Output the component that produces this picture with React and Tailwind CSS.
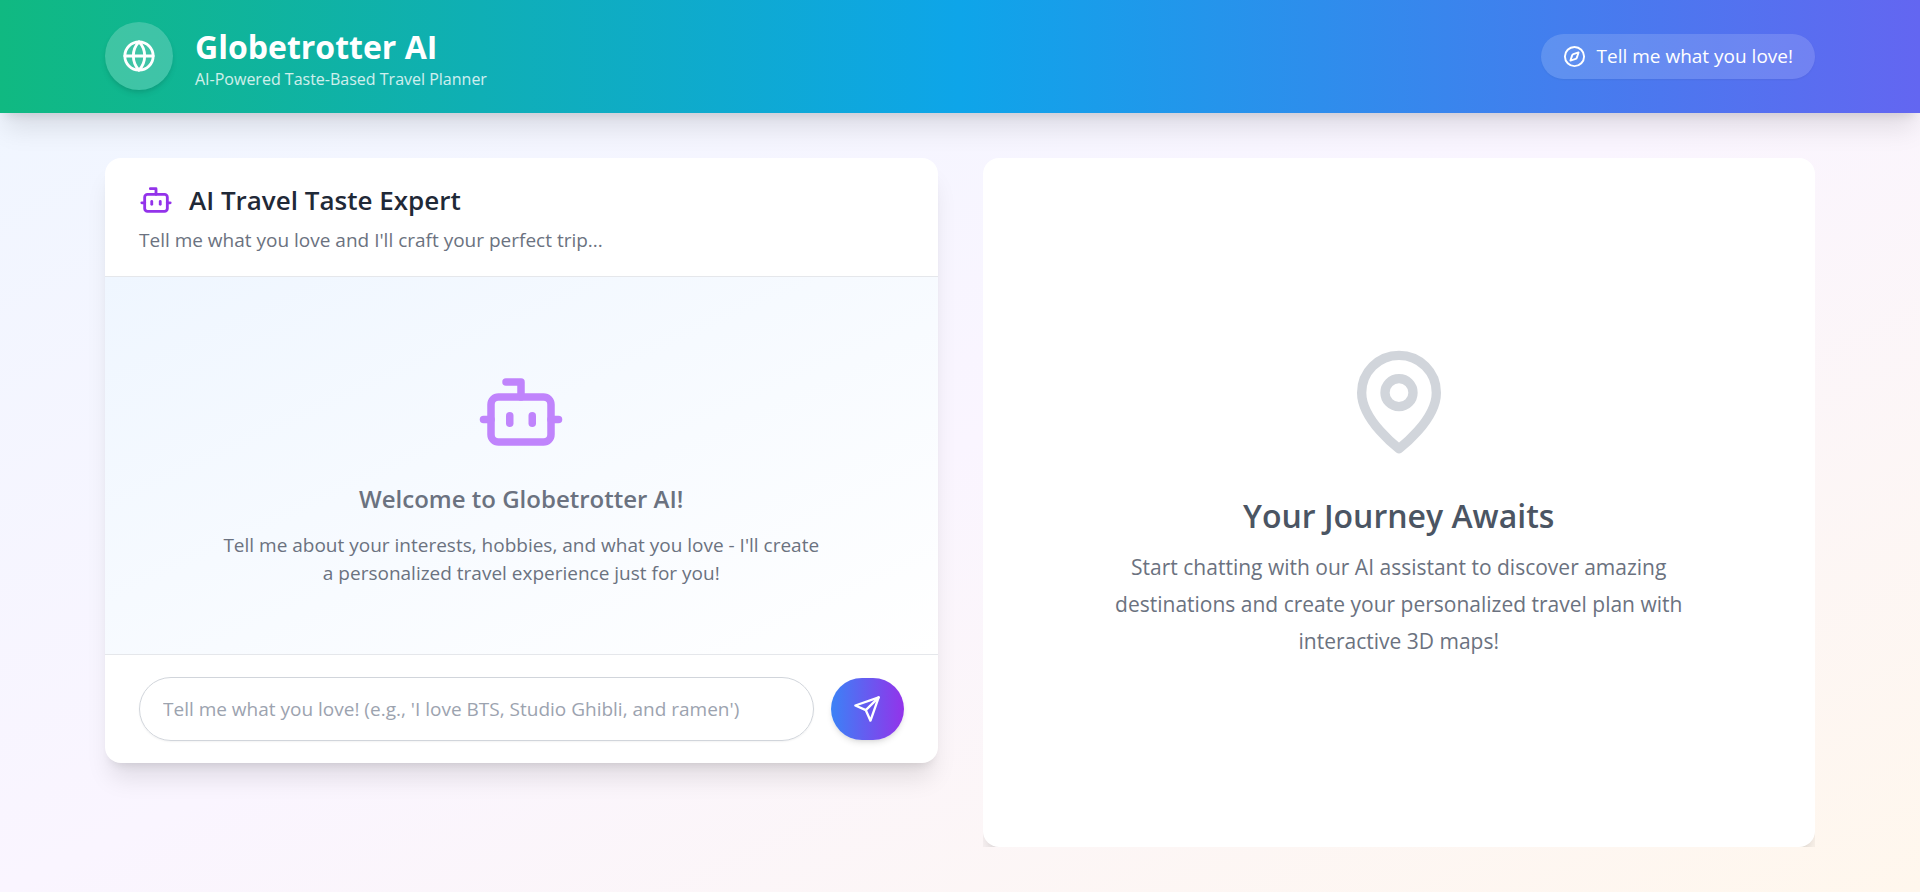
import { useState } from "react";
import { Bot, Compass, Globe } from "lucide-react";

function SendIcon({ className }) {
    return (
        <svg className={className} viewBox="0 0 24 24" fill="none" stroke="currentColor" strokeWidth="2" strokeLinecap="round" strokeLinejoin="round" aria-hidden="true">
            <path d="m22 2-7 20-4-9-9-4Z" />
            <path d="M22 2 11 13" />
        </svg>
    );
}

function PinIcon({ className }) {
    return (
        <svg className={className} viewBox="0 0 24 24" fill="none" stroke="currentColor" strokeWidth="2" strokeLinecap="round" strokeLinejoin="round" aria-hidden="true">
            <path d="M20 10c0 6-8 12-8 12s-8-6-8-12a8 8 0 0 1 16 0Z" />
            <circle cx="12" cy="10" r="3" />
        </svg>
    );
}

function Header() {
    return (
        <header className="bg-linear-to-r/srgb from-[#10b981] via-[#0ea5e9] to-[#6366f1] text-white shadow-xl">
            <div className="max-w-[1800px] mx-auto px-[45px] pt-[22px] pb-[23px] flex items-center justify-between">
                <div className="flex items-center gap-[22px]">
                    <div className="size-[68px] rounded-full bg-white/20 shadow-md flex items-center justify-center">
                        <Globe className="size-[34px]" />
                    </div>
                    <div className="pt-1">
                        <h1 className="text-[32px] leading-[42px] font-bold">Globetrotter AI</h1>
                        <p className="text-base leading-[22px] text-white/80">AI-Powered Taste-Based Travel Planner</p>
                    </div>
                </div>
                <div className="flex items-center gap-[11px] rounded-full bg-white/15 px-[22px] h-[45px] shadow-xs">
                    <Compass className="size-[23px]" />
                    <span className="text-[19px] leading-7">Tell me what you love!</span>
                </div>
            </div>
        </header>
    );
}

function ChatPanel() {
    const [message, setMessage] = useState("");

    function handleSubmit(e) {
        e.preventDefault();
        setMessage("");
    }

    return (
        <section className="bg-white rounded-2xl shadow-xl overflow-hidden">
            <div className="px-[34px] pt-[22px] pb-[22px] border-b border-[#e5e7eb]">
                <h2 className="flex items-center gap-4 text-[26px] leading-[40px] font-semibold text-[#1f2937]">
                    <Bot className="size-[34px] text-[#9333ea]" />
                    AI Travel Taste Expert
                </h2>
                <p className="mt-[6px] text-[19px] leading-7 text-[#6b7280]">Tell me what you love and I'll craft your perfect trip...</p>
            </div>

            <div className="bg-linear-to-br/srgb from-[#eff6ff] to-white pt-[90px] pb-[67px] text-center text-[#6b7280]">
                <Bot className="size-[90px] mx-auto text-[#c084fc]" />
                <h3 className="mt-[22px] text-[24px] leading-10 font-semibold">Welcome to Globetrotter AI!</h3>
                <p className="mt-[12px] max-w-[600px] mx-auto text-[19px] leading-7">
                    Tell me about your interests, hobbies, and what you love - I'll create a personalized travel experience just for you!
                </p>
            </div>

            <form onSubmit={handleSubmit} className="flex items-center gap-[17px] px-[34px] py-[22px] border-t border-[#e5e7eb]">
                <input
                    type="text"
                    aria-label="Message"
                    className="grow min-w-0 h-16 rounded-full border border-[#d1d5db] px-[23px] text-[19px] shadow-xs placeholder:text-[#9ca3af]"
                    placeholder="Tell me what you love! (e.g., 'I love BTS, Studio Ghibli, and ramen')"
                    value={message}
                    onChange={(e) => setMessage(e.target.value)}
                />
                <button type="submit" aria-label="Send" className="w-[73px] h-[62px] rounded-full bg-linear-to-r/srgb from-[#3b82f6] to-[#9333ea] text-white shadow-md flex items-center justify-center">
                    <SendIcon className="size-7" />
                </button>
            </form>
        </section>
    );
}

function JourneyPanel() {
    return (
        <section className="overflow-hidden">
            <div className="bg-white rounded-2xl shadow-xl pt-[188px] pb-[187px] text-center">
                <PinIcon className="size-28 mx-auto text-[#d1d5db]" />
                <h2 className="mt-[35px] text-[32px] leading-[45px] font-semibold text-[#4b5563]">Your Journey Awaits</h2>
                <p className="mt-[11px] max-w-[600px] mx-auto text-[21px] leading-[37px] text-[#6b7280]">
                    Start chatting with our AI assistant to discover amazing destinations and create your personalized travel plan with interactive 3D maps!
                </p>
            </div>
        </section>
    );
}

export default function App() {
    return (
        <div className="min-h-screen bg-linear-to-br/srgb from-[#eff6ff] via-[#faf5ff] to-[#fff7ed] font-['Open_Sans',sans-serif]">
            <Header />
            <main className="max-w-[1800px] mx-auto p-[45px] grid grid-cols-2 gap-[45px] items-start">
                <ChatPanel />
                <JourneyPanel />
            </main>
        </div>
    );
}
